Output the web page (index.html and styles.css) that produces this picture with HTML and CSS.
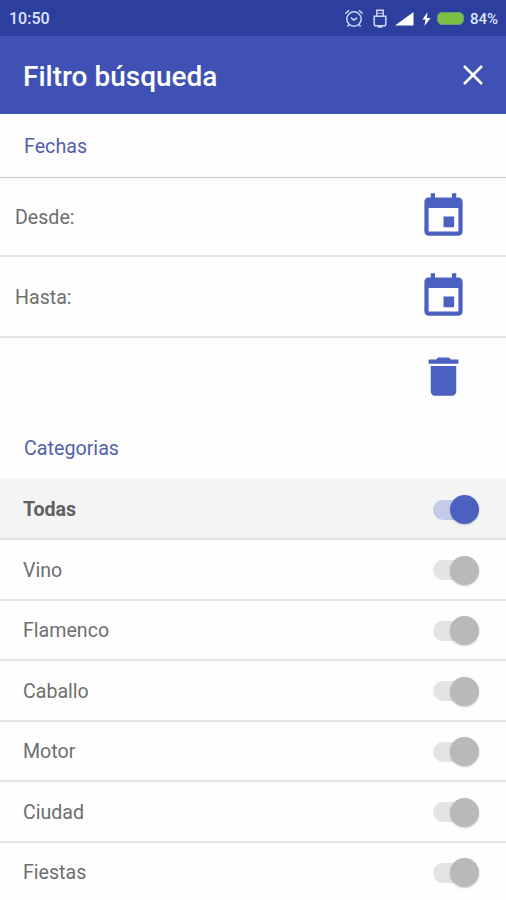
FILE: index.html
```html
<!DOCTYPE html>
<html lang="es">
<head>
  <meta charset="UTF-8">
  <meta name="viewport" content="width=device-width, initial-scale=1.0">
  <title>Filtro búsqueda</title>
  <link rel="stylesheet" href="styles.css">
</head>
<body>

  <div class="status-bar">
    <span class="clock">10:50</span>
    <div class="status-icons">
      <svg class="icon-alarm" width="20" height="20" viewBox="0 0 20 20">
        <circle cx="10" cy="10" r="7.2" />
        <path d="M6.8 8.5l3 2.5 3.2-2M1.3 4.7l3.8-3.4M18.7 4.7l-3.8-3.4M5 15.5l-1.5 2M15 15.5l1.5 2" />
      </svg>
      <svg class="icon-usb" width="14" height="20" viewBox="0 0 14 20">
        <path d="M3.8 7V1.2h6.4V7M1.2 7.2h11.6v7.8q0 1.8-1.8 1.8H3q-1.8 0-1.8-1.8zM4.5 18h5M5.8 3.8v1.2M8.2 3.8v1.2" />
      </svg>
      <svg class="icon-signal" width="19" height="14" viewBox="0 0 19 14">
        <path d="M0 13.5L18.5 0v13.5z" />
      </svg>
      <svg class="icon-bolt" width="9" height="14" viewBox="0 0 9 14">
        <path d="M5.5 0L.5 7.5h3L2.5 14l6-8H5z" />
      </svg>
      <span class="battery"></span>
      <span class="percent">84%</span>
    </div>
  </div>

  <header class="toolbar">
    <h1>Filtro búsqueda</h1>
    <svg class="close" width="20" height="20" viewBox="0 0 20 20">
      <path d="M1 1l18 18M19 1L1 19" />
    </svg>
  </header>

  <h2 class="section-title dates-title">Fechas</h2>

  <div class="date-row">
    <span class="date-label">Desde:</span>
    <svg class="action-icon" viewBox="0 0 24 24">
      <path d="M17 12h-5v5h5v-5zM16 1v2H8V1H6v2H5c-1.11 0-1.99.9-1.99 2L3 19c0 1.1.89 2 2 2h14c1.1 0 2-.9 2-2V5c0-1.1-.9-2-2-2h-1V1h-2zm3 18H5V8h14v11z" />
    </svg>
  </div>
  <div class="date-row last">
    <span class="date-label">Hasta:</span>
    <svg class="action-icon" viewBox="0 0 24 24">
      <path d="M17 12h-5v5h5v-5zM16 1v2H8V1H6v2H5c-1.11 0-1.99.9-1.99 2L3 19c0 1.1.89 2 2 2h14c1.1 0 2-.9 2-2V5c0-1.1-.9-2-2-2h-1V1h-2zm3 18H5V8h14v11z" />
    </svg>
  </div>
  <div class="clear-row">
    <svg class="action-icon" viewBox="0 0 24 24">
      <path d="M6 19c0 1.1.9 2 2 2h8c1.1 0 2-.9 2-2V7H6v12zM19 4h-3.5l-1-1h-5l-1 1H5v2h14V4z" />
    </svg>
  </div>

  <h2 class="section-title categories-title">Categorias</h2>

  <div class="categories">
    <div class="category all"><span>Todas</span><span class="switch on"><span class="knob"></span></span></div>
    <div class="category"><span>Vino</span><span class="switch"><span class="knob"></span></span></div>
    <div class="category"><span>Flamenco</span><span class="switch"><span class="knob"></span></span></div>
    <div class="category"><span>Caballo</span><span class="switch"><span class="knob"></span></span></div>
    <div class="category"><span>Motor</span><span class="switch"><span class="knob"></span></span></div>
    <div class="category"><span>Ciudad</span><span class="switch"><span class="knob"></span></span></div>
    <div class="category"><span>Fiestas</span><span class="switch"><span class="knob"></span></span></div>
  </div>

</body>
</html>
```
FILE: styles.css
```css
* {
  box-sizing: border-box;
}
body {
  margin: 0;
  height: 900px;
  overflow: hidden;
  background-color: #fefefe;
  color: #6e6e6e;
  font-family: Roboto, sans-serif;
  font-size: 19.6px;
}
.status-bar {
  display: flex;
  align-items: center;
  justify-content: space-between;
  height: 36px;
  padding: 1px 8px 0 9px;
  background-color: #2c3e9e;
  color: #dfe5fb;
  font-size: 16px;
  font-weight: 500;
}
.status-icons {
  display: flex;
  align-items: center;
}
.status-icons svg {
  fill: none;
  stroke: #cdd6f8;
  stroke-width: 1.5;
}
.icon-usb {
  margin-left: 9px;
}
.status-icons .icon-signal,
.status-icons .icon-bolt {
  fill: #fff;
  stroke: none;
}
.icon-signal {
  margin-left: 8px;
}
.icon-bolt {
  margin-left: 8px;
}
.battery {
  width: 27px;
  height: 13px;
  margin-left: 6px;
  border: 1px solid #6a9a78;
  border-radius: 5px;
  background-color: #7ac143;
}
.percent {
  margin-left: 6px;
  font-size: 15px;
}
.toolbar {
  display: flex;
  align-items: center;
  justify-content: space-between;
  height: 78px;
  padding: 0 23px;
  background-color: #3f51b5;
  color: #fff;
}
.toolbar h1 {
  margin: 3px 0 0;
  font-size: 28px;
  font-weight: 500;
}
.close {
  fill: none;
  stroke: #fff;
  stroke-width: 2.6;
}
.section-title {
  display: flex;
  align-items: center;
  margin: 0;
  padding-left: 24px;
  color: #5360a8;
  font-size: 19.7px;
  font-weight: 400;
}
.dates-title {
  height: 64px;
  padding-top: 1px;
  border-bottom: 1px solid #c8c8c8;
}
.date-row {
  display: flex;
  align-items: center;
  justify-content: space-between;
  height: 79px;
  padding: 0 37px 0 15px;
  border-bottom: 2px solid #e4e4e4;
}
.date-row.last {
  height: 81px;
}
.date-label {
  padding-top: 2px;
}
.clear-row {
  display: flex;
  align-items: center;
  justify-content: flex-end;
  height: 76px;
  padding-right: 37px;
}
.action-icon {
  width: 51px;
  height: 51px;
  fill: #4c62c2;
}
.categories-title {
  height: 65px;
  padding-top: 4px;
}
.category {
  display: flex;
  align-items: center;
  justify-content: space-between;
  height: 60.5px;
  padding: 2px 27px 0 23px;
  border-bottom: 2px solid #e4e4e4;
}
.category.all {
  height: 61px;
  background-color: #f4f4f4;
  color: #606060;
  font-weight: 700;
}
.switch {
  display: flex;
  align-items: center;
  justify-content: flex-end;
  width: 46px;
  height: 20px;
  border-radius: 10px;
  background-color: #e4e4e4;
}
.knob {
  width: 29px;
  height: 29px;
  border-radius: 50%;
  background-color: #b9b9b9;
  box-shadow: 0 1px 2px rgba(0, 0, 0, 0.2);
}
.switch.on {
  background-color: #c3cbe8;
}
.switch.on .knob {
  background-color: #4c60bf;
}
```
